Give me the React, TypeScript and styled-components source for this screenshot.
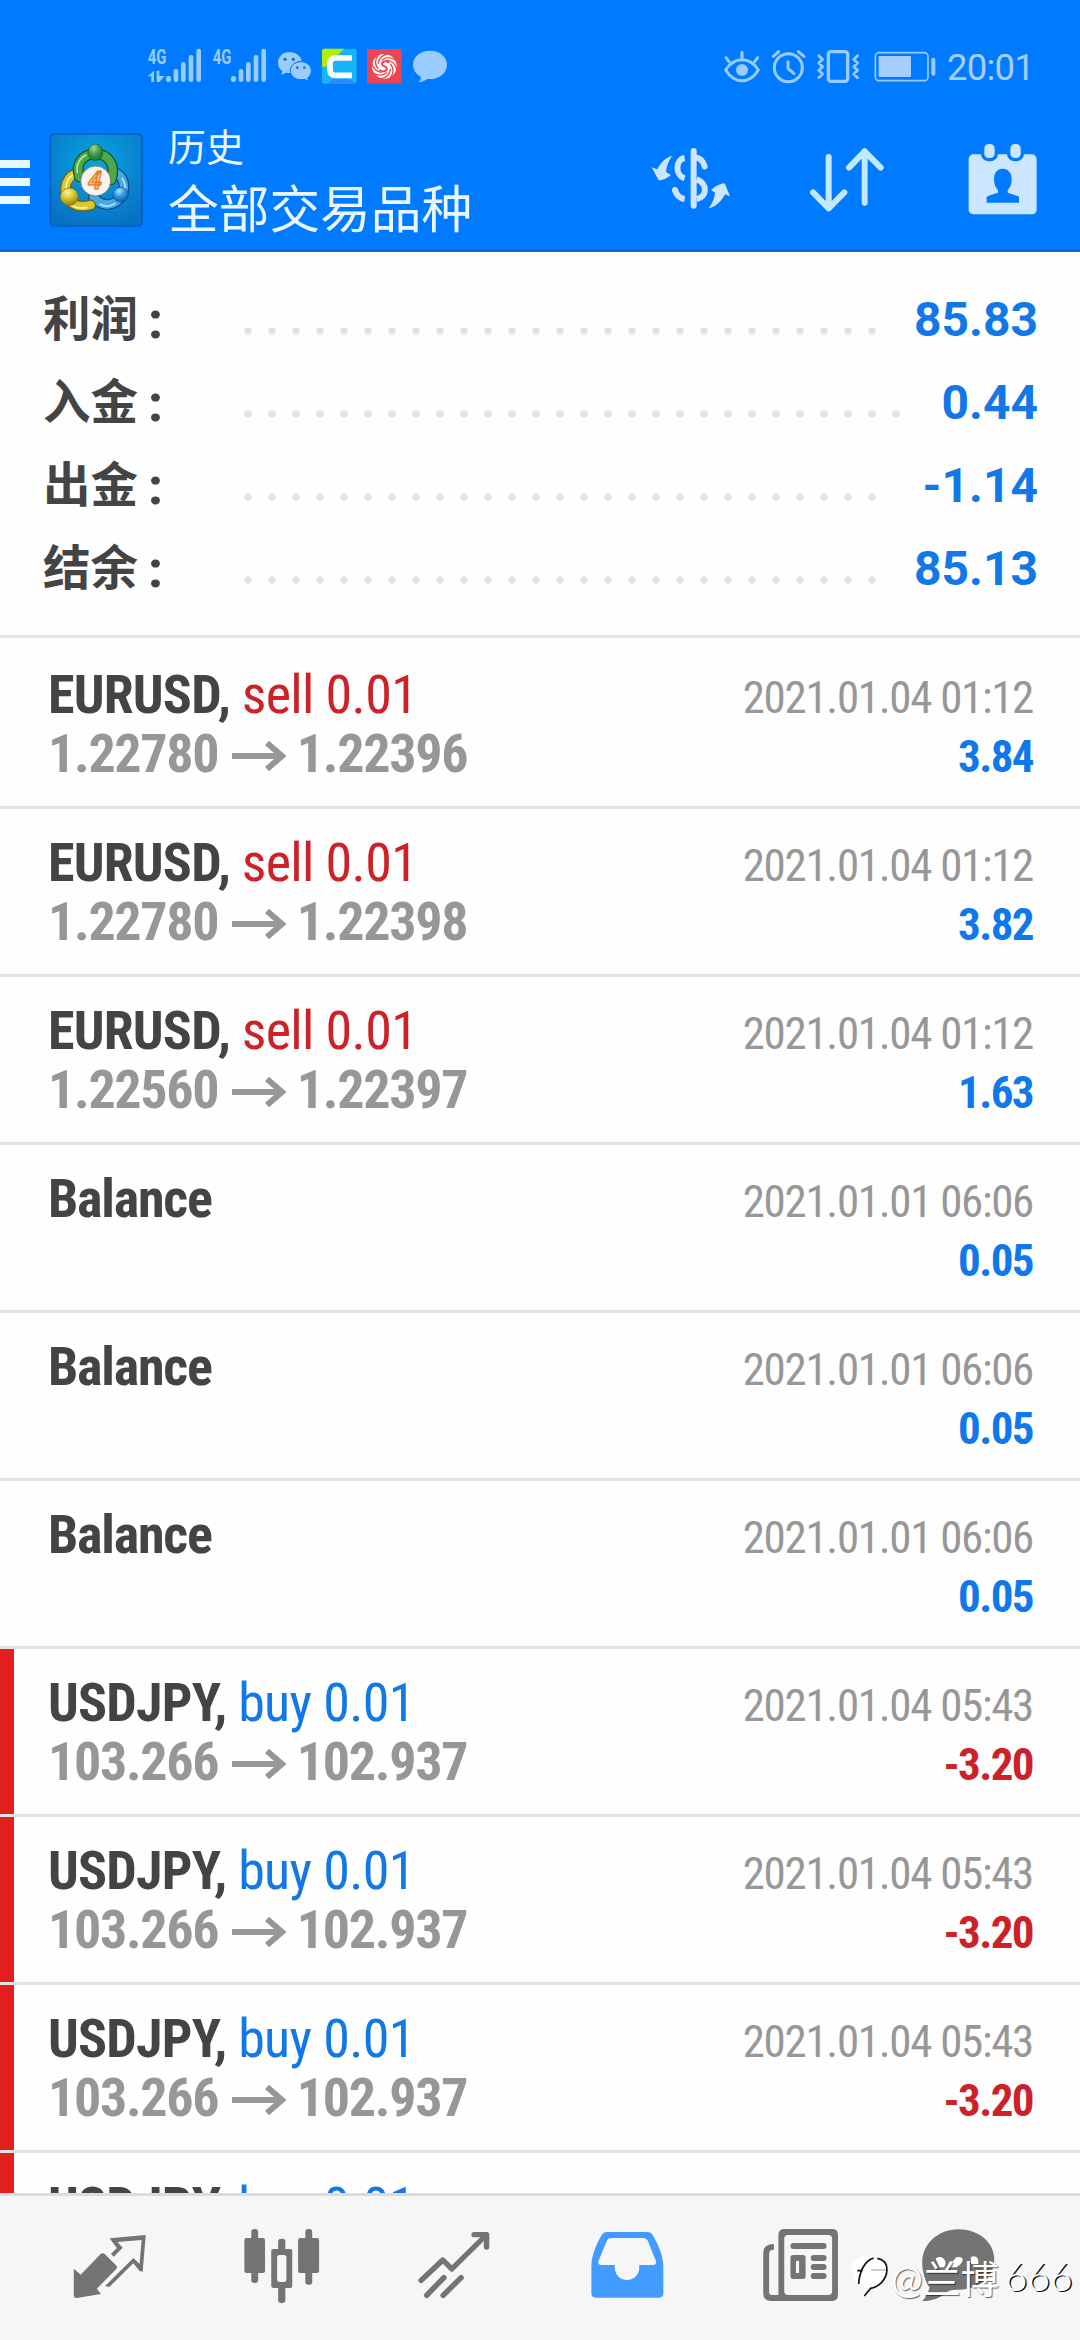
import React from 'react';
import styled, { createGlobalStyle } from 'styled-components';

const Global = createGlobalStyle`
  * { box-sizing: border-box; }
  body { margin: 0; background: #fefefe; }
`;

const Screen = styled.div`
  width: 1080px;
  height: 2340px;
  display: flex;
  flex-direction: column;
  overflow: hidden;
  background: #fefefe;
  font-family: Roboto, "Noto Sans CJK SC", sans-serif;
`;

const Header = styled.header`
  flex: none;
  height: 252px;
  background: #007aff;
  border-bottom: 3px solid #1a66c4;
`;

const StatusBar = styled.div`
  height: 115px;
  display: flex;
  justify-content: space-between;
  padding: 30px 49px 0 130px;
`;

const StatusGroup = styled.div`
  display: flex;
  height: 70px;
`;

const Clock = styled.span`
  flex: none;
  width: 84px;
  color: #a6cfff;
  font-size: 36.5px;
  line-height: 75px;
  letter-spacing: -0.8px;
  white-space: nowrap;
`;

const AppBar = styled.div`
  height: 134px;
  display: flex;
`;

const MenuButton = styled.div`
  width: 30px;
  margin-right: 18px;
  padding-top: 45px;
  display: flex;
  flex-direction: column;
  gap: 10px;
`;

const MenuLine = styled.span`
  height: 8px;
  background: #e8f8ff;
`;

const Titles = styled.div`
  flex: none;
  width: 504px;
  padding-left: 24px;
  color: #e9f6ff;
  font-family: "Noto Sans CJK SC", sans-serif;
  font-weight: 400;
`;

const Subtitle = styled.div`
  margin-top: 2px;
  font-size: 38px;
  line-height: 56px;
`;

const Title = styled.div`
  font-size: 50.7px;
  line-height: 66px;
`;

const Summary = styled.section`
  flex: none;
  height: 386px;
  padding: 26px 42px 0 43px;
  border-bottom: 3px solid #e4e4e4;
`;

const SummaryRow = styled.div`
  height: 83px;
  display: flex;
  align-items: center;
`;

const SummaryLabel = styled.div`
  display: flex;
  width: 193px;
  padding-top: 2px;
  color: #444;
  font-size: 47.5px;
  font-weight: 700;
  line-height: 83px;
`;

const Colon = styled.span`
  margin-left: 10px;
  font-family: Roboto, sans-serif;
  font-size: 52px;
  font-weight: 800;
`;

const SummaryValue = styled.div`
  margin-left: auto;
  color: #1278e8;
  font-size: 48px;
  font-weight: 700;
  line-height: 83px;
`;

const Dots = styled.div<{ $count: number }>`
  width: ${(p) => p.$count * 24}px;
  height: 8px;
  margin-top: 22px;
  background: radial-gradient(circle at 12px 4px, #e2e2e2 3.2px, transparent 4.2px) 0 0 / 24px 8px repeat-x;
`;

const List = styled.main`
  flex: 1;
  min-height: 0;
  overflow: hidden;
`;

const Row = styled.div<{ $first?: boolean; $loss?: boolean }>`
  height: ${(p) => (p.$first ? 171 : 168)}px;
  display: flex;
  justify-content: space-between;
  padding: ${(p) => (p.$first ? 27 : 24)}px 47px 0 48px;
  border-bottom: 3px solid #e4e4e4;
  box-shadow: ${(p) => (p.$loss ? 'inset 14px 0 0 #e21f1f' : 'none')};
`;

const Details = styled.div`
  font-family: "Roboto Condensed", Roboto, sans-serif;
  font-stretch: 75%;
  font-size: 54px;
  line-height: 59px;
  white-space: nowrap;
`;

const Deal = styled.div<{ $balance?: boolean }>`
  color: #444;
  font-weight: 700;
  letter-spacing: ${(p) => (p.$balance ? -1.2 : -0.8)}px;
`;

const Side = styled.span<{ $buy?: boolean }>`
  color: ${(p) => (p.$buy ? '#1278e8' : '#cc2227')};
  font-weight: 400;
  letter-spacing: -0.65px;
`;

const Prices = styled.div`
  display: flex;
  align-items: center;
  color: #979799;
  font-weight: 700;
  letter-spacing: -1.3px;
`;

const Meta = styled.div`
  padding-top: 3px;
  font-family: "Roboto Condensed", Roboto, sans-serif;
  font-stretch: 75%;
  font-size: 45px;
  line-height: 59px;
  letter-spacing: -1.3px;
  text-align: right;
  white-space: nowrap;
`;

const Time = styled.div`
  color: #979797;
`;

const Profit = styled.div<{ $loss?: boolean }>`
  color: ${(p) => (p.$loss ? '#cc2227' : '#0f78ea')};
  font-weight: 700;
  letter-spacing: -1.6px;
`;

const Nav = styled.nav`
  position: relative;
  flex: none;
  height: 147px;
  display: flex;
  padding: 32px 0 0 24px;
  background: #f6f6f6;
  border-top: 3px solid #dcdcdc;
`;

const NavItem = styled.div`
  flex: none;
  width: 172.5px;
  display: flex;
  justify-content: center;
  svg { width: 76px; height: 76px; overflow: visible; }
`;

const Watermark = styled.div`
  position: absolute;
  left: 850px;
  top: 50px;
  display: flex;
  align-items: center;
  height: 60px;
  color: #fff;
  font-family: Lato, "Noto Sans CJK SC", sans-serif;
  font-size: 38px;
  font-weight: 300;
  white-space: nowrap;
`;

const Handle = styled.span`
  font-weight: 400;
  text-shadow: 1px 1px 1px rgba(0, 0, 0, 0.6);
`;

const Digits = styled.span`
  margin-left: 6px;
  font-size: 39px;
  text-shadow: 1.5px 1px 0 #111;
`;

const StatusLeft = () => (
  <svg width="340" height="70" viewBox="0 0 1020 210">
    <g fill="#99ccff">
      <g fontFamily="Roboto" fontWeight="700" fontSize="58">
        <text x="53" y="101" textLength="56" lengthAdjust="spacingAndGlyphs">4G</text>
        <text x="248" y="101" textLength="56" lengthAdjust="spacingAndGlyphs">4G</text>
      </g>
      {[0, 195].map((dx) => (
        <g key={dx} transform={`translate(${dx} 0)`}>
          <rect x="108" y="138" width="15" height="18" rx="7" />
          <rect x="131" y="117" width="14" height="39" rx="7" />
          <rect x="153" y="96" width="14" height="60" rx="7" />
          <rect x="176" y="75" width="14" height="81" rx="7" />
          <rect x="199" y="56" width="14" height="100" rx="7" />
        </g>
      ))}
      <path d="M53 139 L72 122 V156 H64 V139Z M80 122 H88 V138 H104 L88 156 H80Z" />
      <path d="M478 66c-19 0-34 14-34 32 0 11 5 20 13 25l-3 12 13-7c5 1 9 1 14 1-3-20 12-36 34-37-3-15-18-26-37-26z" />
      <path stroke="#007aff" strokeWidth="3" d="M513 95c-18 0-32 12-32 27s14 27 32 27c4 0 8 0 11-1l12 6-3-10c7-5 11-13 11-22 0-15-13-27-31-27z" />
      <path d="M900 62c-29 0-51 18-51 42 0 16 10 29 23 36 1 8-2 12-7 16 12 1 20-4 27-9 34 3 59-16 59-43 0-24-22-42-51-42z" />
    </g>
    <g fill="#2a6db5"><circle cx="465" cy="88" r="5" /><circle cx="490" cy="88" r="5" /><circle cx="502" cy="113" r="4" /><circle cx="523" cy="113" r="4" /></g>
    <rect x="576" y="56" width="104" height="105" rx="8" fill="#18b4f8" />
    <path d="M576 110V64q0-8 8-8h58l-54 54z" fill="#b0f000" />
    <path d="M610 146l40 0 28 12q-3 3-8 3H590z" fill="#2a8cf0" />
    <path d="M666 84h-50q-16 0-16 16v19q0 17 17 17h49" stroke="#fff" strokeWidth="17" fill="none" />
    <rect x="711" y="57" width="104" height="104" fill="#ee4550" />
    <circle cx="763" cy="109" r="37" fill="#fff" />
    <g fill="none" stroke="#ee4550" strokeLinecap="round">
      {[0, 45, 90, 135, 180, 225, 270, 315].map((r) => (
        <path key={r} transform={`rotate(${r} 763 109)`} d="M745 100c1-14 12-26 28-28" strokeWidth="4" />
      ))}
      <path d="M776 97c-10-7-21-2-20 6 1 6 12 5 14 11 2 9-10 13-20 7" strokeWidth="6" />
    </g>
  </svg>
);

const StatusRight = () => (
  <svg width="247" height="70" viewBox="0 0 741 210" fill="none" stroke="#99ccff" strokeWidth="9" strokeLinecap="round" strokeLinejoin="round">
    <path d="M77 120c26-41 72-41 98 0-26 43-72 43-98 0z" />
    <circle cx="126" cy="120" r="18" fill="#99ccff" stroke="none" />
    <path d="M126 67v18M78 83l9 12M173 83l-9 12" />
    <circle cx="265" cy="113" r="42" />
    <path d="M264 95v20l18 16M220 79l16-14M295 65l17 14" />
    <rect x="385" y="65" width="58" height="89" rx="8" strokeWidth="10" />
    <path d="M356 77l12 11-12 11 12 11-12 11 12 11-12 11M473 77l-12 11 12 11-12 11 12 11-12 11 12 11" strokeWidth="8" />
    <rect x="526" y="68" width="158" height="84" rx="11" strokeWidth="5" />
    <rect x="536" y="78" width="97" height="63" fill="#a6cfff" stroke="none" rx="3" />
    <path d="M700 89v42" strokeWidth="12" />
  </svg>
);

const LogoSvg = styled.svg`
  flex: none;
  width: 96px;
  height: 134px;
`;

const Logo = () => (
  <LogoSvg viewBox="144 0 288 402">
    <defs>
      <radialGradient id="lbg" cx="50%" cy="30%" r="75%"><stop offset="0" stopColor="#08a5e0" /><stop offset="1" stopColor="#0870c4" /></radialGradient>
      <radialGradient id="lg" cx="40%" cy="25%" r="80%"><stop offset="0" stopColor="#a4d890" /><stop offset=".5" stopColor="#3f9a45" /><stop offset="1" stopColor="#1c6b2c" /></radialGradient>
      <radialGradient id="ly" cx="40%" cy="25%" r="80%"><stop offset="0" stopColor="#fbf6a0" /><stop offset=".5" stopColor="#d3bf28" /><stop offset="1" stopColor="#8a7a10" /></radialGradient>
      <radialGradient id="lb" cx="40%" cy="25%" r="80%"><stop offset="0" stopColor="#a8e0ff" /><stop offset=".5" stopColor="#2f92dc" /><stop offset="1" stopColor="#0c5599" /></radialGradient>
    </defs>
    <rect x="151" y="57" width="275" height="276" rx="13" fill="url(#lbg)" stroke="#0a5cc0" strokeWidth="5" />
    <g fill="none" strokeLinecap="round">
      <path d="M352 176c26 18 26 56 4 78-26 24-56 16-76-8" stroke="#0c4a88" strokeWidth="32" />
      <path d="M352 176c26 18 26 56 4 78-26 24-56 16-76-8" stroke="#48a8e4" strokeWidth="25" />
      <path d="M366 190c10 14 12 28 6 42M300 268c16 8 32 6 44-2" stroke="#b0e4ff" strokeWidth="5" />
      <path d="M240 172c-42 8-52 48-36 78 16 26 44 26 68 20" stroke="#6b6410" strokeWidth="32" />
      <path d="M240 172c-42 8-52 48-36 78 16 26 44 26 68 20" stroke="#d8c832" strokeWidth="25" />
      <path d="M198 220c0-20 8-34 24-42M220 274c16 8 28 6 40 4" stroke="#fbf7a8" strokeWidth="5" />
      <path d="M238 186c-12-36 6-68 48-70 42 2 62 36 48 78" stroke="#14502a" strokeWidth="32" />
      <path d="M238 186c-12-36 6-68 48-70 42 2 62 36 48 78" stroke="#4ca848" strokeWidth="25" />
      <path d="M232 172c-4-24 8-44 26-52" stroke="#b9e6a0" strokeWidth="5" />
    </g>
    <ellipse cx="286" cy="112" rx="22" ry="25" fill="url(#lg)" stroke="#1a5c2a" strokeWidth="2" />
    <ellipse cx="208" cy="245" rx="27" ry="26" fill="url(#ly)" stroke="#807410" strokeWidth="2" />
    <ellipse cx="362" cy="239" rx="23" ry="22" fill="url(#lb)" stroke="#0c4a88" strokeWidth="2" />
    <circle cx="287" cy="198" r="45" fill="#f7f3f0" stroke="#5a6030" strokeWidth="2" />
    <text x="285" y="223" textAnchor="middle" fontFamily="Roboto" fontWeight="700" fontStyle="italic" fontSize="76" fill="#ffc070" stroke="#e06a18" strokeWidth="3">4</text>
  </LogoSvg>
);

const Actions = () => (
  <svg width="426" height="134" viewBox="82 -1 1278 402" fill="#cce6ff">
    <g fill="none" stroke="#cce6ff" strokeWidth="18">
      <path d="M219 107V271" strokeLinecap="round" />
      <path d="M192 128c-29 5-29 52 0 61" />
      <path d="M163 224c4 15 15 25 29 27" />
      <path d="M228 127c13 3 20 13 24 26M163 224v1" strokeLinecap="round" />
      <path d="M228 192c33 12 33 52 0 59" />
    </g>
    <path d="M154 121c-10 16-17 32-18 49l15 9c-10 8-22 16-37 16l-21-39 17 6c8-17 22-34 44-41z" />
    <path d="M264 279c12-16 18-32 19-47l-12-8c12-10 24-19 41-20l16 39-15-6c-9 18-26 37-49 42z" />
    <g fill="none" stroke="#c4e8ff" strokeWidth="18" strokeLinecap="round" strokeLinejoin="round">
      <path d="M624 125V278M577 231l47 48 47-48M732 262V108M685 157l47-49 48 49" />
    </g>
    <rect x="1044" y="117" width="204" height="180" rx="14" />
    <g stroke="#007aff" strokeWidth="10"><rect x="1086" y="81" width="41" height="52" rx="18" /><rect x="1164" y="81" width="41" height="52" rx="18" /></g>
    <path fill="#007aff" d="M1146 160c17 0 27 13 27 32 0 16-6 26-12 33v7c13 5 27 7 34 13v17h-97v-17c7-6 21-8 34-13v-7c-6-7-12-17-12-33 0-19 9-32 26-32z" />
  </svg>
);

const NavIcon = ({ x, children }: { x: number; children: React.ReactNode }) => (
  <svg viewBox={`${x} 264 220.7 228`} preserveAspectRatio="none" fill="#747474">{children}</svg>
);

const ChatIcon = () => (
  <svg viewBox="284.3 24 228 228">
    <path fill="#747474" d="M354 28c60 0 108 38 108 90 0 56-48 91-108 91-18 0-28 2-38 10-18 16-44 25-70 24 10-10 18-26 22-40-12-18-22-46-22-75 0-56 48-100 108-100z" />
    <path fill="#fff" d="M286 116c12-10 28-4 30 14l-4 12h-14zM322 142l26-30q16-4 20 6-2 14-20 24zM392 112q14-8 22 6l0 14h-22z" />
  </svg>
);

const WatermarkIcon = () => (
  <svg width="41" height="52" viewBox="24 110 123 156">
    <path d="M28 164c0-26 25-36 57-36 34 0 52 20 52 44 0 24-22 48-50 50H68c-24 0-40-30-40-58z" fill="#fff" />
    <path d="M50 212c2-38 18-70 45-78M46 172h16" stroke="#111" strokeWidth="5" fill="none" />
    <path d="M88 170h47" stroke="#999" strokeWidth="3" fill="none" />
    <path d="M106 135c20 4 29 16 29 34-2 32-24 51-49 56l-19 23" stroke="#111" strokeWidth="5" fill="none" />
  </svg>
);

const Arrow = styled.svg`
  width: 55px;
  height: 30px;
  margin: 5px 10px 0 13.5px;
`;

const summary = [
  { label: '利润', value: '85.83', dots: 27 },
  { label: '入金', value: '0.44', dots: 28 },
  { label: '出金', value: '-1.14', dots: 27 },
  { label: '结余', value: '85.13', dots: 27 },
];

type Entry = { symbol?: string; side?: string; from?: string; to?: string; time: string; profit: string };

const sell = (from: string, to: string, profit: string): Entry => ({ symbol: 'EURUSD', side: 'sell', from, to, time: '2021.01.04 01:12', profit });
const balance: Entry = { time: '2021.01.01 06:06', profit: '0.05' };
const buy: Entry = { symbol: 'USDJPY', side: 'buy', from: '103.266', to: '102.937', time: '2021.01.04 05:43', profit: '-3.20' };

const entries: Entry[] = [
  sell('1.22780', '1.22396', '3.84'),
  sell('1.22780', '1.22398', '3.82'),
  sell('1.22560', '1.22397', '1.63'),
  balance, balance, balance,
  buy, buy, buy, buy,
];

export default function App() {
  return (
    <Screen>
      <Global />
      <Header>
        <StatusBar>
          <StatusGroup><StatusLeft /></StatusGroup>
          <StatusGroup><StatusRight /><Clock>20:01</Clock></StatusGroup>
        </StatusBar>
        <AppBar>
          <MenuButton><MenuLine /><MenuLine /><MenuLine /></MenuButton>
          <Logo />
          <Titles>
            <Subtitle>历史</Subtitle>
            <Title>全部交易品种</Title>
          </Titles>
          <Actions />
        </AppBar>
      </Header>
      <Summary>
        {summary.map((s) => (
          <SummaryRow key={s.label}>
            <SummaryLabel>{s.label}<Colon>:</Colon></SummaryLabel>
            <Dots $count={s.dots} />
            <SummaryValue>{s.value}</SummaryValue>
          </SummaryRow>
        ))}
      </Summary>
      <List>
        {entries.map((e, i) => {
          const loss = e.profit.startsWith('-');
          return (
            <Row key={i} $first={i === 0} $loss={loss}>
              <Details>
                <Deal $balance={!e.symbol}>
                  {e.symbol ? <>{e.symbol}, <Side $buy={e.side === 'buy'}>{e.side} 0.01</Side></> : 'Balance'}
                </Deal>
                {e.from && (
                  <Prices>
                    {e.from}
                    <Arrow viewBox="0 0 55 30" fill="none" stroke="#979799" strokeWidth="6"><path d="M0 15H51M35 2L50 15L35 28" /></Arrow>
                    {e.to}
                  </Prices>
                )}
              </Details>
              <Meta>
                <Time>{e.time}</Time>
                <Profit $loss={loss}>{e.profit}</Profit>
              </Meta>
            </Row>
          );
        })}
      </List>
      <Nav>
        <NavItem>
          <NavIcon x={209.8}>
            <path d="M215 386l20 18 58-62q6-5 12 0l34 35q3 5 0 9l-57 60 12 16-70 12q-9 0-9-9z" />
            <path fillRule="evenodd" d="M319 295l105-10-9 110-9-2-18-23-70 71-12-3 82-84 18 18 6-72-70 6 15 17-26 27-8-8 17-18z" />
          </NavIcon>
        </NavItem>
        <NavItem>
          <NavIcon x={710.8}>
            <rect x="709" y="294" width="60" height="105" rx="6" /><rect x="729" y="267" width="20" height="162" rx="9" />
            <rect x="865" y="294" width="61" height="105" rx="6" /><rect x="886" y="267" width="20" height="167" rx="9" />
            <rect x="807" y="296" width="21" height="193" rx="9" /><rect x="787" y="327" width="61" height="117" rx="6" />
            <rect x="804" y="345" width="27" height="81" rx="7" fill="#f6f6f6" />
          </NavIcon>
        </NavItem>
        <NavItem>
          <NavIcon x={1210}>
            <path fill="none" stroke="#747474" strokeWidth="16" strokeLinecap="round" strokeLinejoin="round" d="M1222 421l63-61 26 27 100-102M1376 284h36v37M1238 466l50-53M1286 466l52-53" />
          </NavIcon>
        </NavItem>
        <NavItem>
          <NavIcon x={143}>
            <path fill="#429cff" fillRule="evenodd" d="M190 276h122q8 0 13 9c14 24 31 62 31 92v83q0 13-13 13H160q-13 0-13-13v-83c0-30 16-68 30-92q5-9 13-9zM204 294q-8 0-12 8l-24 60q-4 13 8 13h39v9c2 48 69 48 71 0v-9h40q12 0 8-13l-22-57q-4-11-15-11z" />
          </NavIcon>
        </NavItem>
        <NavItem>
          <NavIcon x={642.4}>
            <path fillRule="evenodd" d="M708 267h138q17 0 17 17v182q0 17-17 17H669q-23 0-23-23V338q0-26 31-26v17q-14 0-14 13v114q0 9 8 9h19V284q0-17 18-17zM718 285q-11 0-11 11v158q0 11 11 11h117q11 0 11-11V296q0-11-11-11z" />
            <rect x="725" y="309" width="105" height="18" rx="9" />
            <path fillRule="evenodd" d="M733 345h28q8 0 8 8v56q0 8-8 8h-28q-8 0-8-8v-56q0-8 8-8zM741 363v36h9v-36z" />
            <rect x="784" y="345" width="46" height="18" rx="9" /><rect x="784" y="372" width="46" height="18" rx="9" /><rect x="784" y="399" width="46" height="18" rx="9" />
          </NavIcon>
        </NavItem>
        <NavItem><ChatIcon /></NavItem>
        <Watermark>
          <WatermarkIcon />
          <Handle>@兰博</Handle>
          <Digits>666</Digits>
        </Watermark>
      </Nav>
    </Screen>
  );
}
